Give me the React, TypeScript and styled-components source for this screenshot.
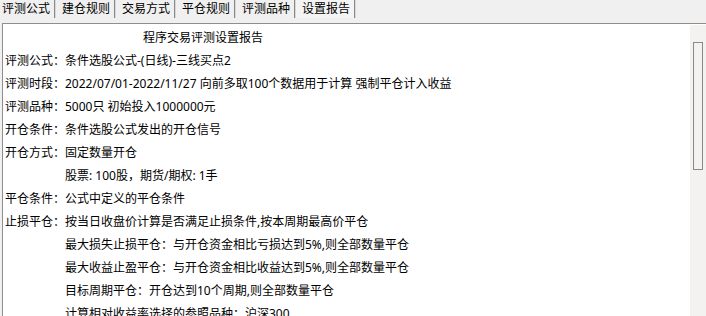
import React from 'react';
import styled, { createGlobalStyle } from 'styled-components';

const GlobalStyle = createGlobalStyle`
  html, body {
    margin: 0;
    padding: 0;
    background: #f0f0f0;
  }
  body {
    font-family: 'Noto Sans', 'Noto Sans CJK SC', 'Microsoft YaHei', sans-serif;
    font-size: 12px;
    color: #000;
  }
`;

// whole dialog area
const Window = styled.div`
  width: 706px;
  height: 316px;
  overflow: hidden;
  background: #f0f0f0;
  display: flex;
  flex-direction: column;
`;

const TabBar = styled.div`
  display: flex;
  height: 18px;
  flex: none;
`;

const Tab = styled.div<{ $first?: boolean; $active?: boolean }>`
  height: 18px;
  line-height: 17px;
  padding: 0 4px 0 ${p => (p.$first ? '2px' : '6px')};
  border-right: 1px solid #8a8a8a;
  box-shadow: 1px 0 0 #d8d8d8;
  margin-right: 1px;
  background: ${p => (p.$active ? '#f4f4f4' : '#f0f0f0')};
  white-space: nowrap;
`;

// report pane under the tabs
const Panel = styled.div`
  flex: 1;
  margin: 5px 0 0 2px;
  border-top: 1px solid #8e8e8e;
  border-left: 1px solid #8e8e8e;
  background: #fff;
  display: flex;
  min-height: 0;
`;

const Content = styled.div`
  flex: 1;
  padding: 2px 0 0 2px;
  line-height: 23px;
`;

const Title = styled.div`
  width: 396px;
  text-align: center;
`;

const Row = styled.div<{ $indent?: boolean }>`
  display: flex;
  white-space: nowrap;
  padding-left: ${p => (p.$indent ? '60px' : '0')};
`;

const Label = styled.span`
  width: 60px;
  flex: none;
`;

const Scrollbar = styled.div`
  width: 16px;
  flex: none;
  margin-top: 1px;
  background: #f3f2f1;
  padding: 17px 3px 0 3px;
  box-sizing: border-box;
`;

const Thumb = styled.div`
  height: 128px;
  border: 1px solid #8a8a8a;
  box-sizing: border-box;
  background: #f3f2f1;
`;

const tabs = ['评测公式', '建仓规则', '交易方式', '平仓规则', '评测品种', '设置报告'];

type Line = { label?: string; text: string };

const lines: Line[] = [
  { label: '评测公式：', text: '条件选股公式-(日线)-三线买点2' },
  { label: '评测时段：', text: '2022/07/01-2022/11/27 向前多取100个数据用于计算 强制平仓计入收益' },
  { label: '评测品种：', text: '5000只 初始投入1000000元' },
  { label: '开仓条件：', text: '条件选股公式发出的开仓信号' },
  { label: '开仓方式：', text: '固定数量开仓' },
  { text: '股票: 100股，期货/期权: 1手' },
  { label: '平仓条件：', text: '公式中定义的平仓条件' },
  { label: '止损平仓：', text: '按当日收盘价计算是否满足止损条件,按本周期最高价平仓' },
  { text: '最大损失止损平仓：与开仓资金相比亏损达到5%,则全部数量平仓' },
  { text: '最大收益止盈平仓：与开仓资金相比收益达到5%,则全部数量平仓' },
  { text: '目标周期平仓：开仓达到10个周期,则全部数量平仓' },
  { text: '计算相对收益率选择的参照品种：沪深300' },
];

const App: React.FC = () => {
  return (
    <>
      <GlobalStyle />
      <Window>
        <TabBar>
          {tabs.map((t, i) => (
            <Tab key={t} $first={i === 0} $active={i === tabs.length - 1}>
              {t}
            </Tab>
          ))}
        </TabBar>
        <Panel>
          <Content>
            <Title>程序交易评测设置报告</Title>
            {lines.map((l, i) =>
              l.label ? (
                <Row key={i}>
                  <Label>{l.label}</Label>
                  <span>{l.text}</span>
                </Row>
              ) : (
                <Row key={i} $indent>
                  {l.text}
                </Row>
              )
            )}
          </Content>
          <Scrollbar>
            <Thumb />
          </Scrollbar>
        </Panel>
      </Window>
    </>
  );
};

export default App;
